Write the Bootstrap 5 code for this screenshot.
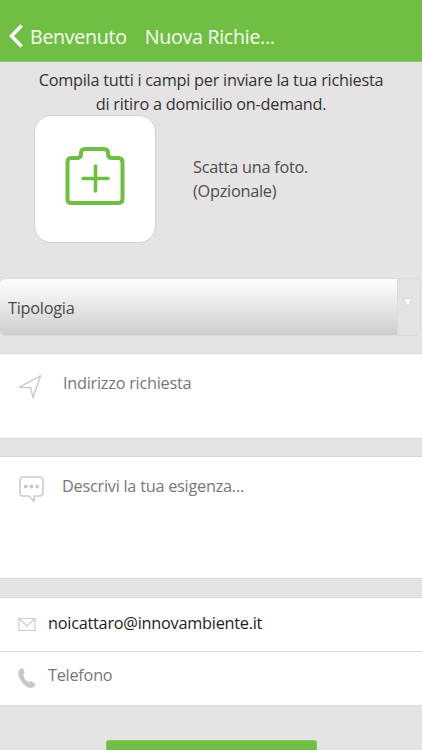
<!DOCTYPE html>
<html lang="it">
<head>
<meta charset="utf-8">
<meta name="viewport" content="width=device-width, initial-scale=1">
<title>Nuova Richiesta</title>
<link href="https://cdn.jsdelivr.net/npm/bootstrap@5.3.0/dist/css/bootstrap.min.css" rel="stylesheet">
<style>
html,body{height:750px}
body{background:#e5e3e4;font-family:"Open Sans","Noto Sans",sans-serif;font-size:16.3px;letter-spacing:-.25px;line-height:24px;color:#333}
.topbar{height:62px;background:#70bf44;border-bottom:1px solid #8cc66c;padding:24px 0 0 9px;font-size:19.6px;letter-spacing:-.28px;line-height:25px;color:#f5fff0}
.back-icon{width:14px;height:24px;margin-right:7px}
.page-title{margin-left:18px}
.intro{padding-top:6px;height:53px}
.photo-row{height:163px;padding-left:34px}
.photo-box{width:122px;height:128px;background:#fff;border:1px solid #d2d0d1;border-radius:17px}
.camera-icon{margin:0 0 6px 0}
.photo-text{margin-left:37px;padding-top:40px;color:#4d4d4d}
.picker{height:58px;margin:0 1px 0 -1px;border:1px solid #dbdadb;border-radius:6px;overflow:hidden;color:#4a4a4a}
.picker-value{background:linear-gradient(#fff,#cdcdcd);padding:1px 0 0 8px}
.picker-arrow{width:23px;background:#e4e3e4;border-left:1px solid #dadada;padding:19px 0 0 5px}
.field-block{background:#fff;border-top:1px solid #dad9da;border-bottom:1px solid #dad9da;color:#777}
.address{height:86px;margin-top:17px;padding:17px 0 0 18px}
.address-text{margin-left:19px}
.need{height:123px;margin-top:17px;padding:17px 0 0 18px}
.need-icon{margin-top:1px}
.need-text{margin-left:17px}
.contacts{height:109px;margin-top:18px}
.contact-row{padding-left:18px}
.contact-text{margin-left:12px}
.mail-row{height:54px;border-bottom:1px solid #d9d9d9;padding-top:13px;color:#1c1c1c}
.mail-icon{margin-top:5px}
.phone-row{padding-top:11px}
.phone-icon{margin-top:1px}
.send{width:211px;height:10px;margin-top:34px;background:#70bf44;border:1px solid #84c861;border-bottom:0;border-radius:3px 3px 0 0}
svg{display:block;flex:none}
</style>
<script src="https://cdn.jsdelivr.net/npm/bootstrap@5.3.0/dist/js/bootstrap.bundle.min.js"></script>
</head>
<body>
<header class="topbar d-flex align-items-start text-nowrap">
  <svg class="back-icon" viewBox="0 0 14 24" fill="none" stroke="#fff" stroke-width="3.4"><path d="M12.700 1.500 2.500 12l10.200 10.500"/></svg>
  <span>Benvenuto</span><span class="page-title">Nuova Richie...</span>
</header>
<main>
  <p class="intro text-center m-0 text-nowrap">Compila tutti i campi per inviare la tua richiesta<br>di ritiro a domicilio on-demand.</p>
  <div class="photo-row d-flex align-items-start">
    <div class="photo-box d-flex align-items-center justify-content-center">
      <svg class="camera-icon" width="60" height="60" viewBox="0 0 60 60" fill="none" stroke="#70bf44" stroke-width="4" stroke-linecap="round" stroke-linejoin="round"><path d="M6 12H12Q16 12 16 8V7Q16 3 20 3H39Q43 3 43 7V8Q43 12 47 12H53Q57.500 12 57.500 16V53Q57.500 57 53 57H6Q2.500 57 2.500 53V16Q2.500 12 6 12Z"/><path d="M30.500 20V45M18 32.500H43" stroke-width="3.600"/></svg>
    </div>
    <div class="photo-text text-nowrap">Scatta una foto.<br>(Opzionale)</div>
  </div>
  <div class="picker d-flex">
    <div class="picker-value flex-grow-1 d-flex align-items-center">Tipologia</div>
    <div class="picker-arrow"><svg width="10" height="10" viewBox="0 0 10 10"><path d="M.8.800h8.200L4.900 8.800z" fill="#fff" stroke="#c4c4c4" stroke-width=".6"/></svg></div>
  </div>
  <div class="field-block address d-flex align-items-start">
    <svg class="mt-1" width="26" height="28" viewBox="0 0 26 28" fill="none" stroke="#ccc" stroke-width="1.500" stroke-linejoin="round"><path d="M22.500 .8 1.500 12.200l11.200.5L15 22.800Z"/></svg>
    <span class="address-text">Indirizzo richiesta</span>
  </div>
  <div class="field-block need d-flex align-items-start">
    <svg class="need-icon" width="27" height="30" viewBox="0 0 27 30" fill="none" stroke="#ccc" stroke-width="1.600" stroke-linejoin="round"><path d="M5 2h17q3 0 3 3v13q0 3-3 3h-6v5.500L11 21H5q-3 0-3-3V5q0-3 3-3Z"/><g fill="#c8c8c8" stroke="none"><circle cx="7.800" cy="11.500" r="1.900"/><circle cx="13.500" cy="11.500" r="1.900"/><circle cx="19.200" cy="11.500" r="1.900"/></g></svg>
    <span class="need-text">Descrivi la tua esigenza...</span>
  </div>
  <div class="field-block contacts">
    <div class="contact-row mail-row d-flex align-items-start">
      <svg class="mail-icon" width="18" height="16" viewBox="0 0 18 16" fill="none" stroke="#ccc" stroke-width="1.200"><path d="M1 2.500h16v12H1ZM1.500 3 9 10l7.500-7"/></svg>
      <span class="contact-text">noicattaro@innovambiente.it</span>
    </div>
    <div class="contact-row phone-row d-flex align-items-start">
      <svg class="phone-icon" width="18" height="26" viewBox="0 0 18 26"><path d="M4 4.200Q5 4 5.700 5.700L6.500 8Q6.900 9.500 5.300 11.200 6.200 15.500 10.800 18.200 12 16.700 13.500 17.400L16.500 19.300Q18 20.300 16.600 22.200 13.200 25.800 8 22.300 1.700 17.600.4 10.500-.2 4.700 4 4.200Z" fill="#c8c8c8"/></svg>
      <span class="contact-text">Telefono</span>
    </div>
  </div>
  <div class="send mx-auto"></div>
</main>
</body>
</html>
